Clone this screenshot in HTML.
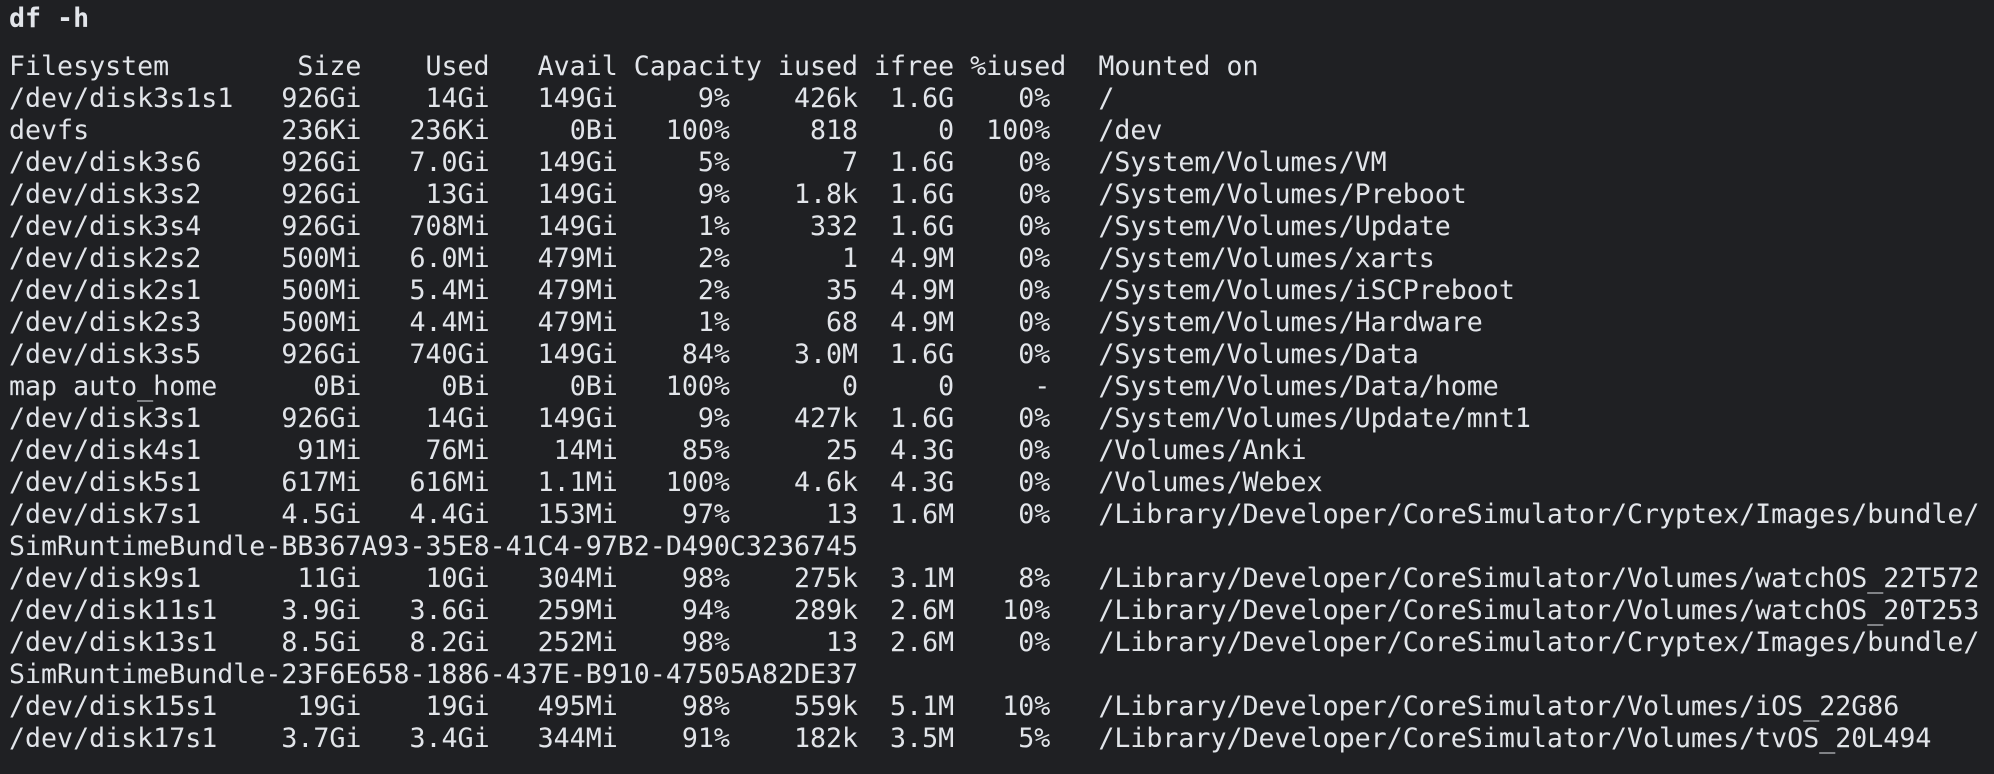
<!DOCTYPE html>
<html><head><meta charset="utf-8"><style>
html,body{margin:0;padding:0;background:#1f2023;}
body{width:1994px;height:774px;overflow:hidden;color:#e2e5ea;font-family:"DejaVu Sans Mono","Liberation Mono",monospace;font-size:26.62px;line-height:32px;}
.w{padding:3px 0 0 9px;}
.h{font-weight:bold;margin-bottom:16px;}
.r{white-space:pre;height:32px;}
.r span{display:inline-block;white-space:pre;box-sizing:border-box;}
.a{width:14ch;}
.s,.u,.v{width:8ch;text-align:right;}
.c{width:9ch;text-align:right;padding-right:2ch;}
.i,.f{width:6ch;text-align:right;}
.p{width:7ch;text-align:right;padding-right:1ch;}
.hd .c,.hd .p{padding-right:0;}
.m{margin-left:2ch;}
</style></head><body><div class="w">
<div class="r h">df -h</div>
<div class="r hd"><span class="a">Filesystem</span><span class="s">Size</span><span class="u">Used</span><span class="v">Avail</span><span class="c">Capacity</span><span class="i">iused</span><span class="f">ifree</span><span class="p">%iused</span><span class="m">Mounted on</span></div>
<div class="r"><span class="a">/dev/disk3s1s1</span><span class="s">926Gi</span><span class="u">14Gi</span><span class="v">149Gi</span><span class="c">9%</span><span class="i">426k</span><span class="f">1.6G</span><span class="p">0%</span><span class="m">/</span></div>
<div class="r"><span class="a">devfs</span><span class="s">236Ki</span><span class="u">236Ki</span><span class="v">0Bi</span><span class="c">100%</span><span class="i">818</span><span class="f">0</span><span class="p">100%</span><span class="m">/dev</span></div>
<div class="r"><span class="a">/dev/disk3s6</span><span class="s">926Gi</span><span class="u">7.0Gi</span><span class="v">149Gi</span><span class="c">5%</span><span class="i">7</span><span class="f">1.6G</span><span class="p">0%</span><span class="m">/System/Volumes/VM</span></div>
<div class="r"><span class="a">/dev/disk3s2</span><span class="s">926Gi</span><span class="u">13Gi</span><span class="v">149Gi</span><span class="c">9%</span><span class="i">1.8k</span><span class="f">1.6G</span><span class="p">0%</span><span class="m">/System/Volumes/Preboot</span></div>
<div class="r"><span class="a">/dev/disk3s4</span><span class="s">926Gi</span><span class="u">708Mi</span><span class="v">149Gi</span><span class="c">1%</span><span class="i">332</span><span class="f">1.6G</span><span class="p">0%</span><span class="m">/System/Volumes/Update</span></div>
<div class="r"><span class="a">/dev/disk2s2</span><span class="s">500Mi</span><span class="u">6.0Mi</span><span class="v">479Mi</span><span class="c">2%</span><span class="i">1</span><span class="f">4.9M</span><span class="p">0%</span><span class="m">/System/Volumes/xarts</span></div>
<div class="r"><span class="a">/dev/disk2s1</span><span class="s">500Mi</span><span class="u">5.4Mi</span><span class="v">479Mi</span><span class="c">2%</span><span class="i">35</span><span class="f">4.9M</span><span class="p">0%</span><span class="m">/System/Volumes/iSCPreboot</span></div>
<div class="r"><span class="a">/dev/disk2s3</span><span class="s">500Mi</span><span class="u">4.4Mi</span><span class="v">479Mi</span><span class="c">1%</span><span class="i">68</span><span class="f">4.9M</span><span class="p">0%</span><span class="m">/System/Volumes/Hardware</span></div>
<div class="r"><span class="a">/dev/disk3s5</span><span class="s">926Gi</span><span class="u">740Gi</span><span class="v">149Gi</span><span class="c">84%</span><span class="i">3.0M</span><span class="f">1.6G</span><span class="p">0%</span><span class="m">/System/Volumes/Data</span></div>
<div class="r"><span class="a">map auto_home</span><span class="s">0Bi</span><span class="u">0Bi</span><span class="v">0Bi</span><span class="c">100%</span><span class="i">0</span><span class="f">0</span><span class="p">-</span><span class="m">/System/Volumes/Data/home</span></div>
<div class="r"><span class="a">/dev/disk3s1</span><span class="s">926Gi</span><span class="u">14Gi</span><span class="v">149Gi</span><span class="c">9%</span><span class="i">427k</span><span class="f">1.6G</span><span class="p">0%</span><span class="m">/System/Volumes/Update/mnt1</span></div>
<div class="r"><span class="a">/dev/disk4s1</span><span class="s">91Mi</span><span class="u">76Mi</span><span class="v">14Mi</span><span class="c">85%</span><span class="i">25</span><span class="f">4.3G</span><span class="p">0%</span><span class="m">/Volumes/Anki</span></div>
<div class="r"><span class="a">/dev/disk5s1</span><span class="s">617Mi</span><span class="u">616Mi</span><span class="v">1.1Mi</span><span class="c">100%</span><span class="i">4.6k</span><span class="f">4.3G</span><span class="p">0%</span><span class="m">/Volumes/Webex</span></div>
<div class="r"><span class="a">/dev/disk7s1</span><span class="s">4.5Gi</span><span class="u">4.4Gi</span><span class="v">153Mi</span><span class="c">97%</span><span class="i">13</span><span class="f">1.6M</span><span class="p">0%</span><span class="m">/Library/Developer/CoreSimulator/Cryptex/Images/bundle/</span></div>
<div class="r">SimRuntimeBundle-BB367A93-35E8-41C4-97B2-D490C3236745</div>
<div class="r"><span class="a">/dev/disk9s1</span><span class="s">11Gi</span><span class="u">10Gi</span><span class="v">304Mi</span><span class="c">98%</span><span class="i">275k</span><span class="f">3.1M</span><span class="p">8%</span><span class="m">/Library/Developer/CoreSimulator/Volumes/watchOS_22T572</span></div>
<div class="r"><span class="a">/dev/disk11s1</span><span class="s">3.9Gi</span><span class="u">3.6Gi</span><span class="v">259Mi</span><span class="c">94%</span><span class="i">289k</span><span class="f">2.6M</span><span class="p">10%</span><span class="m">/Library/Developer/CoreSimulator/Volumes/watchOS_20T253</span></div>
<div class="r"><span class="a">/dev/disk13s1</span><span class="s">8.5Gi</span><span class="u">8.2Gi</span><span class="v">252Mi</span><span class="c">98%</span><span class="i">13</span><span class="f">2.6M</span><span class="p">0%</span><span class="m">/Library/Developer/CoreSimulator/Cryptex/Images/bundle/</span></div>
<div class="r">SimRuntimeBundle-23F6E658-1886-437E-B910-47505A82DE37</div>
<div class="r"><span class="a">/dev/disk15s1</span><span class="s">19Gi</span><span class="u">19Gi</span><span class="v">495Mi</span><span class="c">98%</span><span class="i">559k</span><span class="f">5.1M</span><span class="p">10%</span><span class="m">/Library/Developer/CoreSimulator/Volumes/iOS_22G86</span></div>
<div class="r"><span class="a">/dev/disk17s1</span><span class="s">3.7Gi</span><span class="u">3.4Gi</span><span class="v">344Mi</span><span class="c">91%</span><span class="i">182k</span><span class="f">3.5M</span><span class="p">5%</span><span class="m">/Library/Developer/CoreSimulator/Volumes/tvOS_20L494</span></div>
</div></body></html>
